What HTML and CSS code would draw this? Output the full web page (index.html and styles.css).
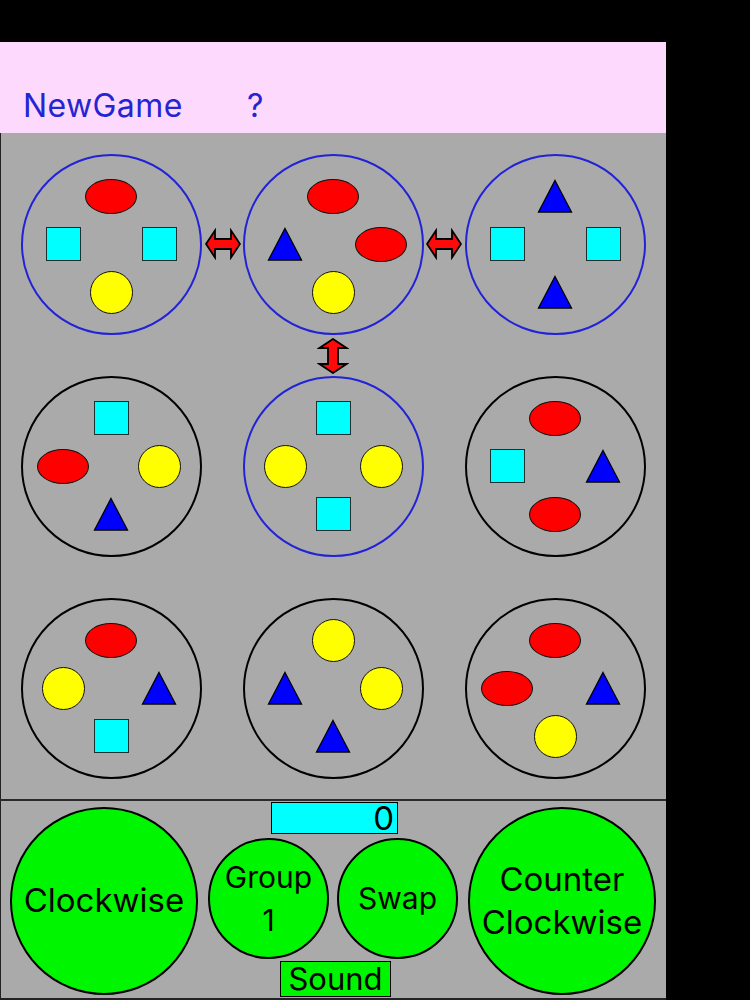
FILE: index.html
```html
<!DOCTYPE html>
<html>
<head>
<meta charset="utf-8">
<title>Rotation Puzzle</title>
<link rel="stylesheet" href="styles.css">
</head>
<body>
<div class="screen">
  <header class="header">
    <span class="menu-btn newgame">NewGame</span>
    <span class="menu-btn">?</span>
  </header>

  <main class="board">
    <!-- Row 1 -->
    <div class="cell"><div class="ring blue"><div class="slots">
      <div class="ellipse t"></div>
      <div class="square l"></div>
      <div class="square r"></div>
      <div class="dot b"></div>
    </div></div></div>
    <div class="cell"><div class="ring blue"><div class="slots">
      <div class="ellipse t"></div>
      <svg class="tri l" viewBox="0 0 36 34"><polygon points="18,1.5 34.5,33 1.5,33"/></svg>
      <div class="ellipse r"></div>
      <div class="dot b"></div>
    </div></div></div>
    <div class="cell"><div class="ring blue"><div class="slots">
      <svg class="tri t" viewBox="0 0 36 34"><polygon points="18,1.5 34.5,33 1.5,33"/></svg>
      <div class="square l"></div>
      <div class="square r"></div>
      <svg class="tri b" viewBox="0 0 36 34"><polygon points="18,1.5 34.5,33 1.5,33"/></svg>
    </div></div></div>

    <!-- Row 2 -->
    <div class="cell"><div class="ring"><div class="slots">
      <div class="square t"></div>
      <div class="ellipse l"></div>
      <div class="dot r"></div>
      <svg class="tri b" viewBox="0 0 36 34"><polygon points="18,1.5 34.5,33 1.5,33"/></svg>
    </div></div></div>
    <div class="cell"><div class="ring blue"><div class="slots">
      <div class="square t"></div>
      <div class="dot l"></div>
      <div class="dot r"></div>
      <div class="square b"></div>
    </div></div></div>
    <div class="cell"><div class="ring"><div class="slots">
      <div class="ellipse t"></div>
      <div class="square l"></div>
      <svg class="tri r" viewBox="0 0 36 34"><polygon points="18,1.5 34.5,33 1.5,33"/></svg>
      <div class="ellipse b"></div>
    </div></div></div>

    <!-- Row 3 -->
    <div class="cell"><div class="ring"><div class="slots">
      <div class="ellipse t"></div>
      <div class="dot l"></div>
      <svg class="tri r" viewBox="0 0 36 34"><polygon points="18,1.5 34.5,33 1.5,33"/></svg>
      <div class="square b"></div>
    </div></div></div>
    <div class="cell"><div class="ring"><div class="slots">
      <div class="dot t"></div>
      <svg class="tri l" viewBox="0 0 36 34"><polygon points="18,1.5 34.5,33 1.5,33"/></svg>
      <div class="dot r"></div>
      <svg class="tri b" viewBox="0 0 36 34"><polygon points="18,1.5 34.5,33 1.5,33"/></svg>
    </div></div></div>
    <div class="cell"><div class="ring"><div class="slots">
      <div class="ellipse t"></div>
      <div class="ellipse l"></div>
      <svg class="tri r" viewBox="0 0 36 34"><polygon points="18,1.5 34.5,33 1.5,33"/></svg>
      <div class="dot b"></div>
    </div></div></div>

    <!-- swap arrows between linked rings -->
    <svg class="arrow h arrow-1" viewBox="0 0 36 32"><polygon points="1,16 10,2.5 10,11 26,11 26,2.5 35,16 26,29.5 26,21 10,21 10,29.5"/></svg>
    <svg class="arrow h arrow-2" viewBox="0 0 36 32"><polygon points="1,16 10,2.5 10,11 26,11 26,2.5 35,16 26,29.5 26,21 10,21 10,29.5"/></svg>
    <svg class="arrow v arrow-3" viewBox="0 0 32 36"><polygon points="16,1 29.5,10 21,10 21,26 29.5,26 16,35 2.5,26 11,26 11,10 2.5,10"/></svg>
  </main>

  <div class="divider"></div>

  <footer class="controls">
    <div class="btn big">Clockwise</div>
    <div class="middle">
      <div class="score">0</div>
      <div class="pair">
        <div class="btn small">Group<br>1</div>
        <div class="btn small">Swap</div>
      </div>
      <div class="sound">Sound</div>
    </div>
    <div class="btn big">Counter<br>Clockwise</div>
  </footer>
</div>
</body>
</html>
```

FILE: styles.css
```css
html, body {
  margin: 0;
  padding: 0;
  background: #000;
}

body {
  width: 750px;
  height: 1000px;
  overflow: hidden;
  font-family: Inter, "Liberation Sans", Arial, sans-serif;
}

.screen {
  width: 666px;
  padding-top: 42px;
}

/* ---------- header ---------- */
.header {
  height: 91px;
  background: #fdd9fd;
  display: flex;
  align-items: flex-end;
  padding: 0 0 9px 23px;
  box-sizing: border-box;
}

.menu-btn {
  font-size: 32px;
  line-height: 36px;
  color: #2424d2;
  letter-spacing: 0.4px;
}

.newgame {
  width: 224px;
}

/* ---------- board ---------- */
.board {
  position: relative;
  display: grid;
  grid-template-columns: repeat(3, 222px);
  grid-template-rows: repeat(3, 222px);
  background: #aaaaaa;
  box-shadow: inset 1px 0 0 #222;
}

.cell {
  display: flex;
  align-items: center;
  justify-content: center;
}

.ring {
  width: 181px;
  height: 181px;
  box-sizing: border-box;
  border: 2px solid #000;
  border-radius: 50%;
  display: flex;
  align-items: center;
  justify-content: center;
}

.ring.blue {
  border-color: #2323d6;
}

.slots {
  display: grid;
  grid-template-columns: repeat(3, 48px);
  grid-template-rows: repeat(3, 48px);
  place-items: center;
}

.t { grid-area: 1 / 2; }
.l { grid-area: 2 / 1; }
.r { grid-area: 2 / 3; }
.b { grid-area: 3 / 2; }

.ellipse {
  width: 52px;
  height: 35px;
  box-sizing: border-box;
  border: 1.5px solid #111;
  border-radius: 50%;
  background: #ff0000;
}

.square {
  width: 35px;
  height: 34px;
  box-sizing: border-box;
  border: 1.5px solid #1a3030;
  background: #00ffff;
}

.dot {
  width: 43px;
  height: 43px;
  box-sizing: border-box;
  border: 1.5px solid #111;
  border-radius: 50%;
  background: #ffff00;
}

.tri {
  width: 36px;
  height: 34px;
  display: block;
}

.tri polygon {
  fill: #0000ff;
  stroke: #000;
  stroke-width: 1.3;
  stroke-linejoin: miter;
}

/* swap arrows overlaying the gaps between rings */
.arrow {
  position: absolute;
  display: block;
}

.arrow polygon {
  fill: #ff0a0a;
  stroke: #000;
  stroke-width: 1.8;
  stroke-linejoin: miter;
}

.arrow.h { width: 36px; height: 32px; }
.arrow.v { width: 32px; height: 36px; }

.arrow-1 { left: 205px; top: 95px; }
.arrow-2 { left: 426px; top: 95px; }
.arrow-3 { left: 317px; top: 205px; }

/* ---------- divider ---------- */
.divider {
  height: 2px;
  background: #2a2a2a;
}

/* ---------- controls ---------- */
.controls {
  height: 199px;
  background: #aaaaaa;
  box-shadow: inset 1px 0 0 #222, inset 0 -2px 0 #222;
  display: flex;
  align-items: center;
  padding: 0 10px;
  gap: 10px;
  box-sizing: border-box;
}

.btn {
  box-sizing: border-box;
  border: 2px solid #000;
  border-radius: 50%;
  background: #00f500;
  color: #000;
  display: flex;
  align-items: center;
  justify-content: center;
  text-align: center;
  flex: none;
}

.btn.big {
  width: 188px;
  height: 188px;
  font-size: 33px;
  line-height: 43px;
}

.btn.small {
  width: 121px;
  height: 121px;
  font-size: 30px;
  line-height: 43px;
}

.middle {
  width: 251px;
  display: flex;
  flex-direction: column;
  align-items: center;
  margin-top: -2px;
}

.pair {
  display: flex;
  gap: 8px;
  margin: 4px 0 2px;
}

.score {
  width: 127px;
  height: 32px;
  box-sizing: border-box;
  border: 1.5px solid #000;
  background: #00ffff;
  font-size: 33px;
  line-height: 30px;
  text-align: right;
  padding-right: 3px;
  margin-left: 3px;
}

.sound {
  width: 111px;
  height: 36px;
  box-sizing: border-box;
  border: 1.5px solid #000;
  background: #00f500;
  font-size: 31px;
  line-height: 34px;
  text-align: center;
  margin-left: 5px;
}
```
